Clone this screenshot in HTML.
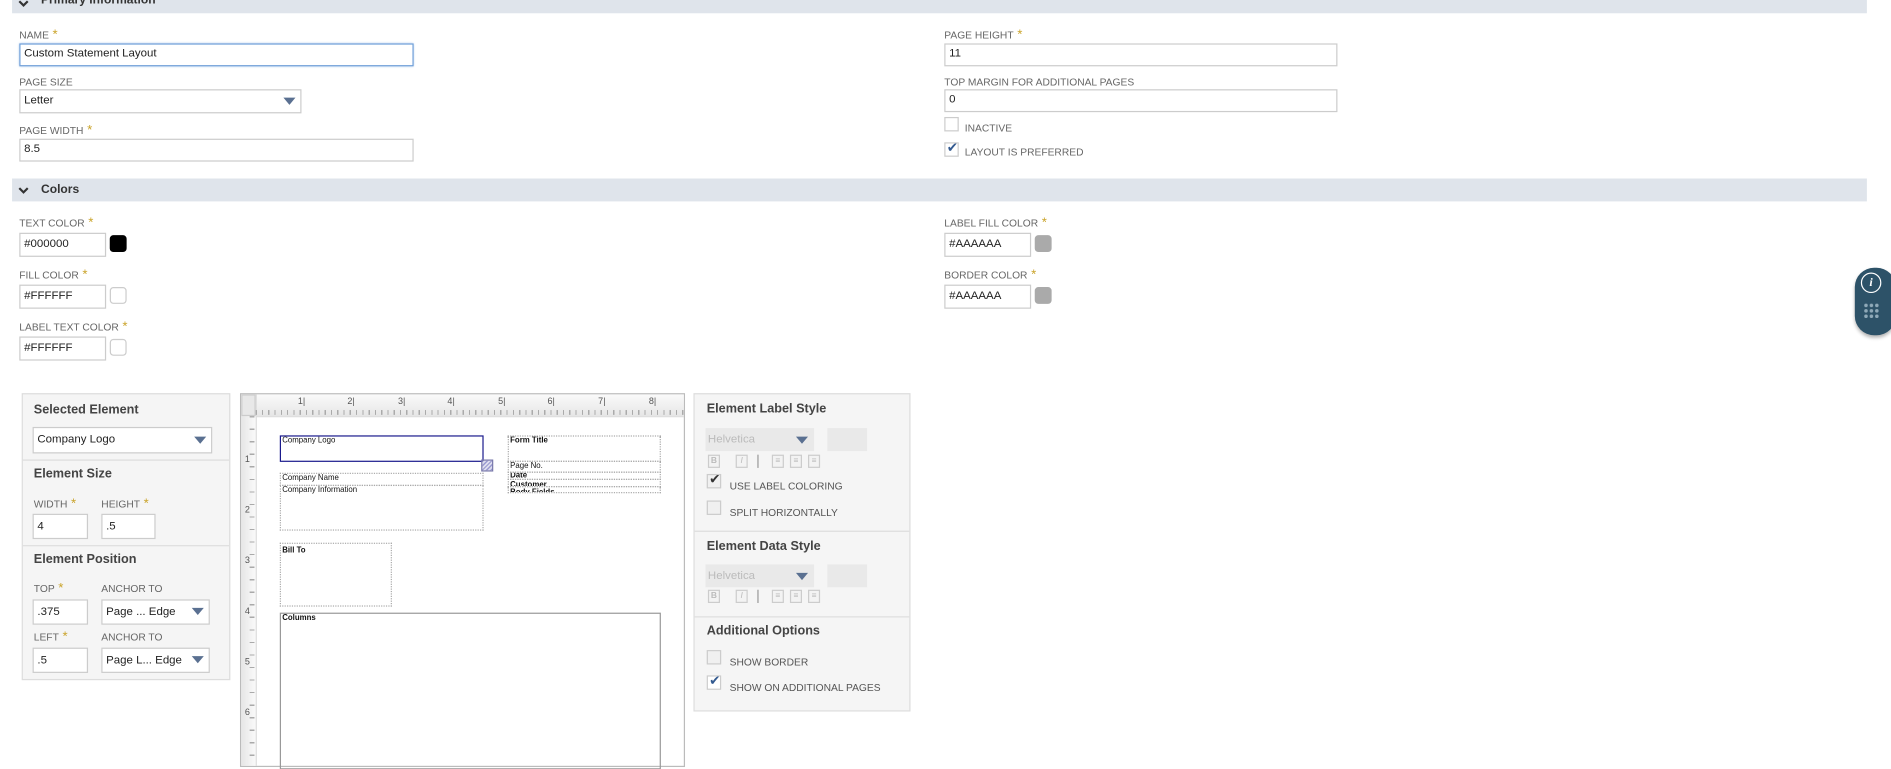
<!DOCTYPE html>
<html><head><meta charset="utf-8"><style>
html,body{margin:0;padding:0;background:#fff;overflow:hidden;width:1891px;height:756px}
#w{position:absolute;left:0;top:0;width:1568px;height:627px;transform:scale(1.2060);transform-origin:0 0;font-family:"Liberation Sans",sans-serif;color:#333}
.a{position:absolute}
.bar{position:absolute;left:10px;width:1538px;background:#dfe4eb;font-weight:bold;font-size:10px;color:#333}
.lbl{position:absolute;font-size:8.5px;color:#666;text-transform:uppercase;white-space:nowrap}
.st{color:#c9a227;font-size:11px;margin-left:3px}
.in{position:absolute;border:1px solid #ccc;box-sizing:border-box;background:#fff;font-size:9.5px;color:#222;padding-left:3px;line-height:16px}
.arr{position:absolute;width:0;height:0;border-left:5px solid transparent;border-right:5px solid transparent;border-top:6px solid #5a7091}
.sw{position:absolute;width:14px;height:14px;border:1px solid #ccc;border-radius:3px;box-sizing:border-box}
.cb{position:absolute;width:12px;height:12px;border:1px solid #ccc;box-sizing:border-box;background:#fff}
.ck{position:absolute;left:1px;top:-3px;font-size:11px;color:#335a90}
.ph{position:absolute;font-weight:bold;font-size:10.5px;color:#444}
.pnl{position:absolute;background:#f5f5f5;border:1px solid #ddd;box-sizing:border-box}
.dv{position:absolute;left:0;right:0;height:1px;background:#ddd}
.el{position:absolute;border:1px dotted #aaa;box-sizing:border-box;font-size:6.5px;color:#111;line-height:8px;padding-left:1px;overflow:hidden;white-space:nowrap}
.b{font-weight:bold}
.tb{position:absolute;width:10px;height:11px;border:1px solid #ccc;box-sizing:border-box;font-size:7px;color:#bbb;text-align:center;line-height:9px;background:#f3f3f3}
</style></head><body><div id="w">

<div class="bar" style="top:-9px;height:20px;line-height:20px"><span style="margin-left:24px">Primary Information</span></div>
<svg class="a" style="left:15px;top:0px" width="9" height="6" viewBox="0 0 9 6"><path d="M1 1l3.5 3.5L8 1" stroke="#333" stroke-width="1.8" fill="none"/></svg>

<div class="lbl" style="left:16px;top:23px">Name<span class="st">*</span></div>
<div class="in" style="left:16px;top:36px;width:327px;height:19px;border:1px solid #6f9fd8;box-shadow:0 0 2px #8ab4e6">Custom Statement Layout</div>
<div class="lbl" style="left:16px;top:63px">Page Size</div>
<div class="in" style="left:16px;top:74px;width:234px;height:20px;line-height:18px">Letter</div>
<div class="arr" style="left:235px;top:81px"></div>
<div class="lbl" style="left:16px;top:102px">Page Width<span class="st">*</span></div>
<div class="in" style="left:16px;top:115px;width:327px;height:19px">8.5</div>

<div class="lbl" style="left:783px;top:23px">Page Height<span class="st">*</span></div>
<div class="in" style="left:783px;top:36px;width:326px;height:19px">11</div>
<div class="lbl" style="left:783px;top:63px">Top Margin for Additional Pages</div>
<div class="in" style="left:783px;top:74px;width:326px;height:19px">0</div>
<div class="cb" style="left:783px;top:97px"></div>
<div class="lbl" style="left:800px;top:101px">Inactive</div>
<div class="cb" style="left:783px;top:118px"><span class="ck">&#10004;</span></div>
<div class="lbl" style="left:800px;top:121px">Layout is Preferred</div>

<div class="bar" style="top:148px;height:19px;line-height:19px"><span style="margin-left:24px">Colors</span></div>
<svg class="a" style="left:15px;top:155px" width="9" height="6" viewBox="0 0 9 6"><path d="M1 1l3.5 3.5L8 1" stroke="#333" stroke-width="1.8" fill="none"/></svg>

<div class="lbl" style="left:16px;top:179px">Text Color<span class="st">*</span></div>
<div class="in" style="left:16px;top:193px;width:72px;height:20px;line-height:18px">#000000</div>
<div class="sw" style="left:91px;top:195px;background:#000;border-color:#000"></div>
<div class="lbl" style="left:16px;top:222px">Fill Color<span class="st">*</span></div>
<div class="in" style="left:16px;top:236px;width:72px;height:20px;line-height:18px">#FFFFFF</div>
<div class="sw" style="left:91px;top:238px"></div>
<div class="lbl" style="left:16px;top:265px">Label Text Color<span class="st">*</span></div>
<div class="in" style="left:16px;top:279px;width:72px;height:20px;line-height:18px">#FFFFFF</div>
<div class="sw" style="left:91px;top:281px"></div>

<div class="lbl" style="left:783px;top:179px">Label Fill Color<span class="st">*</span></div>
<div class="in" style="left:783px;top:193px;width:72px;height:20px;line-height:18px">#AAAAAA</div>
<div class="sw" style="left:858px;top:195px;background:#aaa;border-color:#aaa"></div>
<div class="lbl" style="left:783px;top:222px">Border Color<span class="st">*</span></div>
<div class="in" style="left:783px;top:236px;width:72px;height:20px;line-height:18px">#AAAAAA</div>
<div class="sw" style="left:858px;top:238px;background:#aaa;border-color:#aaa"></div>

<div class="a" style="left:1538px;top:222px;width:34px;height:56px;border-radius:16px;background:#2d5268;box-shadow:0 2px 3px rgba(0,0,0,.3)">
 <div class="a" style="left:5px;top:4px;width:15px;height:15px;border:1.5px solid #fff;border-radius:50%;color:#fff;font:italic bold 10px 'Liberation Serif',serif;text-align:center;line-height:15px">i</div>
 <div class="a" style="left:7px;top:29px;width:14px;height:14px;background:radial-gradient(circle,#8fa9b8 1.4px,transparent 1.6px) 0 0/4.5px 4.5px"></div>
</div>

<div class="pnl" style="left:18px;top:326px;width:173px;height:238px">
 <div class="ph" style="left:9px;top:7px">Selected Element</div>
 <div class="in" style="left:8px;top:27px;width:149px;height:22px;line-height:20px">Company Logo</div>
 <div class="arr" style="left:142px;top:35px"></div>
 <div class="dv" style="top:54px"></div>
 <div class="ph" style="left:9px;top:60px">Element Size</div>
 <div class="lbl" style="left:9px;top:85px">Width<span class="st">*</span></div>
 <div class="lbl" style="left:65px;top:85px">Height<span class="st">*</span></div>
 <div class="in" style="left:8px;top:99px;width:46px;height:21px;line-height:19px">4</div>
 <div class="in" style="left:65px;top:99px;width:45px;height:21px;line-height:19px">.5</div>
 <div class="dv" style="top:125px"></div>
 <div class="ph" style="left:9px;top:131px">Element Position</div>
 <div class="lbl" style="left:9px;top:155px">Top<span class="st">*</span></div>
 <div class="lbl" style="left:65px;top:156px">Anchor To</div>
 <div class="in" style="left:8px;top:170px;width:46px;height:21px;line-height:19px">.375</div>
 <div class="in" style="left:65px;top:170px;width:90px;height:21px;line-height:19px">Page ... Edge</div>
 <div class="arr" style="left:140px;top:177px"></div>
 <div class="lbl" style="left:9px;top:195px">Left<span class="st">*</span></div>
 <div class="lbl" style="left:65px;top:196px">Anchor To</div>
 <div class="in" style="left:8px;top:210px;width:46px;height:21px;line-height:19px">.5</div>
 <div class="in" style="left:65px;top:210px;width:90px;height:21px;line-height:19px">Page L... Edge</div>
 <div class="arr" style="left:140px;top:217px"></div>
</div>

<div class="a" style="left:199px;top:326px;width:369px;height:310px;border:1px solid #bbb;box-sizing:border-box;background:#fff;overflow:hidden">
 <div class="a" style="left:0;top:0;width:369px;height:18px;background:linear-gradient(#fafafa,#e6e6e6);border-bottom:1px solid #ddd"></div>
 <div class="a" style="left:0;top:0;width:12px;height:310px;background:linear-gradient(90deg,#e6e6e6,#fafafa);border-right:1px solid #ddd"></div>
 <div class="a" style="left:0;top:0;width:12px;height:18px;background:#e8e8e8;border:1px solid #ccc;box-sizing:border-box"></div>
 <div class="a" style="left:12px;top:13px;width:357px;height:4px;background:repeating-linear-gradient(90deg,#aaa 0 1px,transparent 1px 5.2px)"></div>
 <div class="a" style="left:7px;top:18px;width:4px;height:292px;background:repeating-linear-gradient(#aaa 0 1px,transparent 1px 10.4px)"></div>
</div>
<div class="a" style="top:328px;left:0;font-size:7.5px;color:#555">
 <span class="a" style="left:247px">1|</span><span class="a" style="left:288px">2|</span><span class="a" style="left:330px">3|</span><span class="a" style="left:371px">4|</span><span class="a" style="left:413px">5|</span><span class="a" style="left:454px">6|</span><span class="a" style="left:496px">7|</span><span class="a" style="left:538px">8|</span>
</div>
<div class="a" style="left:203px;top:0;font-size:7.5px;color:#555">
 <span class="a" style="top:376px">1</span><span class="a" style="top:418px">2</span><span class="a" style="top:460px">3</span><span class="a" style="top:502px">4</span><span class="a" style="top:544px">5</span><span class="a" style="top:586px">6</span>
</div>
<div class="el" style="left:232px;top:361px;width:169px;height:22px;border:1px solid #1a1a8c">Company Logo</div>
<div class="a" style="left:399px;top:381px;width:8px;height:8px;background:repeating-linear-gradient(135deg,#9a9ad0 0 1px,#dde 1px 2.5px);border:1px solid #77a"></div>
<div class="el b" style="left:421px;top:361px;width:127px;height:22px">Form Title</div>
<div class="el" style="left:421px;top:382px;width:127px;height:10px">Page No.</div>
<div class="el b" style="left:421px;top:391px;width:127px;height:7px;line-height:6px">Date</div>
<div class="el b" style="left:421px;top:397px;width:127px;height:7px;line-height:9px">Customer</div>
<div class="el b" style="left:421px;top:403px;width:127px;height:6px;line-height:9px">Body Fields</div>
<div class="el" style="left:232px;top:392px;width:169px;height:11px">Company Name</div>
<div class="el" style="left:232px;top:402px;width:169px;height:38px">Company Information</div>
<div class="el b" style="left:232px;top:450px;width:93px;height:53px;line-height:11px">Bill To</div>
<div class="el b" style="left:232px;top:508px;width:316px;height:130px;border:1px solid #999">Columns</div>

<div class="pnl" style="left:575px;top:326px;width:180px;height:264px">
 <div class="ph" style="left:10px;top:6px">Element Label Style</div>
 <div class="a" style="left:9px;top:28px;width:90px;height:19px;background:#e9e9e9;color:#bbb;font-size:9.5px;line-height:19px;padding-left:2px;box-sizing:border-box">Helvetica</div>
 <div class="arr" style="left:84px;top:35px"></div>
 <div class="a" style="left:110px;top:28px;width:33px;height:19px;background:#e9e9e9"></div>
 <div class="tb b" style="left:11px;top:50px">B</div><div class="tb" style="left:34px;top:50px;font-style:italic">I</div>
 <div class="a" style="left:52px;top:50px;width:1px;height:11px;background:#999"></div>
 <div class="tb" style="left:64px;top:50px">≡</div><div class="tb" style="left:79px;top:50px">≡</div><div class="tb" style="left:94px;top:50px">≡</div>
 <div class="cb" style="left:10px;top:66px;background:#f0f0f0"><span class="ck" style="color:#333">&#10004;</span></div>
 <div class="lbl" style="left:29px;top:71px;color:#555">Use Label Coloring</div>
 <div class="cb" style="left:10px;top:88px;background:#f0f0f0"></div>
 <div class="lbl" style="left:29px;top:93px;color:#555">Split Horizontally</div>
 <div class="dv" style="top:113px"></div>
 <div class="ph" style="left:10px;top:120px">Element Data Style</div>
 <div class="a" style="left:9px;top:141px;width:90px;height:19px;background:#e9e9e9;color:#bbb;font-size:9.5px;line-height:19px;padding-left:2px;box-sizing:border-box">Helvetica</div>
 <div class="arr" style="left:84px;top:148px"></div>
 <div class="a" style="left:110px;top:141px;width:33px;height:19px;background:#e9e9e9"></div>
 <div class="tb b" style="left:11px;top:162px">B</div><div class="tb" style="left:34px;top:162px;font-style:italic">I</div>
 <div class="a" style="left:52px;top:162px;width:1px;height:11px;background:#999"></div>
 <div class="tb" style="left:64px;top:162px">≡</div><div class="tb" style="left:79px;top:162px">≡</div><div class="tb" style="left:94px;top:162px">≡</div>
 <div class="dv" style="top:184px"></div>
 <div class="ph" style="left:10px;top:190px">Additional Options</div>
 <div class="cb" style="left:10px;top:212px;background:#f0f0f0"></div>
 <div class="lbl" style="left:29px;top:217px;color:#555">Show Border</div>
 <div class="cb" style="left:10px;top:233px"><span class="ck">&#10004;</span></div>
 <div class="lbl" style="left:29px;top:238px;color:#555">Show on Additional Pages</div>
</div>

</div></body></html>
